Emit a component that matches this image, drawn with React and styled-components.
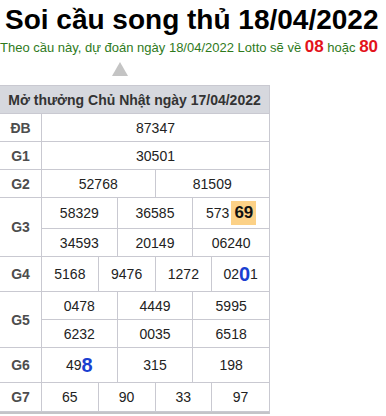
import React from 'react';
import styled, { createGlobalStyle } from 'styled-components';

const GlobalStyle = createGlobalStyle`
  body {
    margin: 0;
    background: #fff;
    font-family: "Liberation Sans", Arial, sans-serif;
  }
`;

const rows = [
  { label: 'ĐB', cols: 1, h: 28, cells: ['87347'] },
  { label: 'G1', cols: 1, h: 28, cells: ['30501'] },
  { label: 'G2', cols: 2, h: 28, cells: ['52768', '81509'] },
  {
    label: 'G3',
    cols: 3,
    h: [31, 28],
    cells: [
      '58329',
      '36585',
      { pre: '573', mark: '69' },
      '34593',
      '20149',
      '06240',
    ],
  },
  { label: 'G4', cols: 4, h: 35, cells: ['5168', '9476', '1272', { pre: '02', big: '0', post: '1' }] },
  { label: 'G5', cols: 3, h: [28, 28], cells: ['0478', '4449', '5995', '6232', '0035', '6518'] },
  { label: 'G6', cols: 3, h: 35, cells: [{ pre: '49', big: '8' }, '315', '198'] },
  { label: 'G7', cols: 4, h: 29, cells: ['65', '90', '33', '97'] },
];

function CellContent({ value }) {
  if (typeof value === 'string') return value;
  return (
    <>
      {value.pre}
      {value.mark && <Mark>{value.mark}</Mark>}
      {value.big && <Big>{value.big}</Big>}
      {value.post}
    </>
  );
}

function App() {
  return (
    <Page>
      <GlobalStyle />
      <Title>Soi cầu song thủ 18/04/2022</Title>
      <Subtitle>
        Theo cầu này, dự đoán ngày 18/04/2022 Lotto sẽ về <Red>08</Red> hoặc <Red>80</Red>
      </Subtitle>
      <Arrow />
      <Board>
        <Header>Mở thưởng Chủ Nhật ngày 17/04/2022</Header>
        {rows.map((row) => {
          const heights = Array.isArray(row.h) ? row.h : [row.h];
          return (
            <Row key={row.label}>
              <Label>{row.label}</Label>
              <Values $cols={row.cols} $rows={heights.map((x) => x + 'px').join(' ')}>
                {row.cells.map((c, i) => (
                  <Cell key={i} $last={(i + 1) % row.cols === 0}>
                    <CellContent value={c} />
                  </Cell>
                ))}
              </Values>
            </Row>
          );
        })}
      </Board>
    </Page>
  );
}

const Page = styled.div`
  width: 386px;
  height: 416px;
  overflow: hidden;
`;

const Title = styled.h1`
  margin: 0;
  padding: 4px 0 0 5px;
  font-size: 28px;
  line-height: 32px;
  font-weight: 700;
  color: #000;
`;

const Subtitle = styled.div`
  margin-top: 2px;
  font-size: 13px;
  line-height: 18px;
  color: #2f7a1c;
  white-space: nowrap;
`;

const Red = styled.b`
  color: #e3131b;
  font-size: 17px;
`;

const Arrow = styled.div`
  width: 0;
  height: 0;
  margin: 5px 0 9px 112px;
  border-left: 8px solid transparent;
  border-right: 8px solid transparent;
  border-bottom: 14px solid #c4c4c4;
`;

const Board = styled.div`
  width: 269px;
  border-right: 1px solid #c9c9d1;
  border-bottom: 2px solid #c4c4c8;
  color: #222;
`;

const Header = styled.div`
  height: 27px;
  border-top: 1px solid #c9c9d1;
  border-bottom: 1px solid #c9c9d1;
  background: #d6d8de;
  display: flex;
  align-items: center;
  justify-content: center;
  font-size: 14px;
  font-weight: 700;
  color: #333;
`;

const Row = styled.div`
  display: grid;
  grid-template-columns: 42px 1fr;
`;

const Label = styled.div`
  display: flex;
  align-items: center;
  justify-content: center;
  border-right: 1px solid #c9c9d1;
  border-bottom: 1px solid #c9c9d1;
  font-size: 14px;
  font-weight: 700;
  color: #4d4d4d;
`;

const Values = styled.div`
  display: grid;
  grid-template-columns: repeat(${(p) => p.$cols}, 1fr);
  grid-template-rows: ${(p) => p.$rows};
`;

const Cell = styled.div`
  display: flex;
  align-items: center;
  justify-content: center;
  box-sizing: border-box;
  border-bottom: 1px solid #c9c9d1;
  border-right: ${(p) => (p.$last ? 'none' : '1px solid #c9c9d1')};
  font-size: 14px;
  color: #222;
`;

const Mark = styled.span`
  margin-left: 2px;
  padding: 2px 3px;
  background: #fcd187;
  font-weight: 700;
  font-size: 17px;
  color: #111;
`;

const Big = styled.span`
  font-size: 20px;
  font-weight: 700;
  color: #1a3fd1;
  line-height: 1;
`;

export default App;
